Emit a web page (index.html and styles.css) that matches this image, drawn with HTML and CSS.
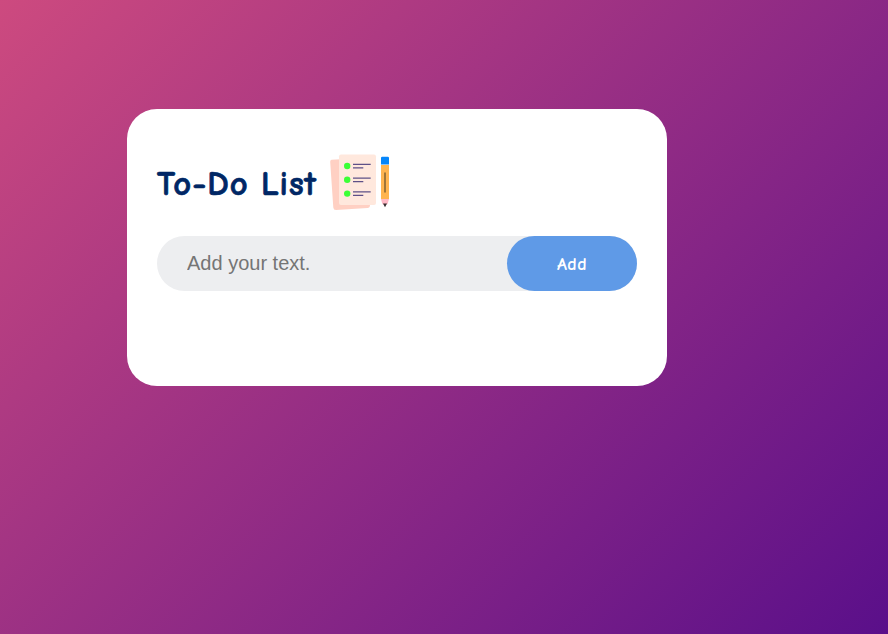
FILE: index.html
```html
<!DOCTYPE html>
<html lang="en">
<head>
<meta charset="utf-8">
<title>To-Do List</title>
<link rel="stylesheet" href="styles.css">
</head>
<body>
<main class="card">
  <h1 class="title"><span class="title-text">To-Do List</span>
    <svg class="title-icon" viewBox="0 0 60 58" aria-hidden="true">
      <path d="M1.5 5.8L34 4l6 47q0 2.800-2.500 3L6 56Q3.500 56 3.300 53.500L.2 8Q0 6 1.500 5.800Z" fill="#ffd0c3"/>
      <rect x="9" y=".5" width="37" height="50.5" rx="2" fill="#ffe8dd"/>
      <g fill="#3bff35"><circle cx="17.2" cy="12" r="3.2"/><circle cx="17.2" cy="25.8" r="3.2"/><circle cx="17.2" cy="39.6" r="3.2"/></g>
      <path d="M23 10.3h17.7M23 13.8h10.3M23 24.1h17.7M23 27.6h10.3M23 37.9h17.7M23 41.4h10.3" stroke="#5e5087" stroke-width="1.3"/>
      <path d="M51 11h8v34h-8z" fill="#ffb450"/>
      <path d="M51 10.5V4q0-1.2 1.2-1.2h5.6Q59 2.8 59 4v6.5z" fill="#0586fb"/>
      <path d="M51 45h8l-1.2 4.5q-.3 1-1.5 1h-2.6q-1.2 0-1.5-1z" fill="#ffb9c6"/>
      <path d="M53 49.5h4L55 53.3z" fill="#382f31"/>
      <path d="M55 18.5v20" stroke="#806032" stroke-width="1.5"/>
    </svg>
  </h1>
  <div class="row">
    <input class="field" type="text" placeholder="Add your text." aria-label="New task">
    <button class="add" type="button">Add</button>
  </div>
</main>
</body>
</html>
```

FILE: styles.css
```css
* {
  box-sizing: border-box;
  margin: 0;
  padding: 0;
}

body {
  min-height: 100vh;
  padding-top: 109px;
  padding-left: 127px;
  background: linear-gradient(135deg, #cd4a7f, #5a0f8a);
  font-family: "Comic Sans MS", "Comic Neue", Lato, sans-serif;
}

.card {
  width: 540px;
  height: 277px;
  padding: 45px 30px 0;
  border-radius: 30px;
  background: #fff;
}

.title {
  display: flex;
  height: 58px;
  align-items: center;
  color: #002765;
  font-size: 34.5px;
  font-weight: 700;
}

.title-text {
  width: 173px;
  padding-top: 2px;
  letter-spacing: 1px;
  word-spacing: -1px;
  white-space: nowrap;
  -webkit-text-stroke: 0.7px #002765;
}

.title-icon {
  width: 60px;
  height: 58px;
}

.row {
  display: flex;
  height: 55px;
  margin-top: 24px;
  border-radius: 30px;
  background: #edeef0;
}

.field {
  flex: 1;
  min-width: 0;
  padding: 0 0 1px 30px;
  border: 0;
  outline: 0;
  background: transparent;
  font-family: "Liberation Sans", Arial, sans-serif;
  font-size: 20px;
}

.field::placeholder {
  color: #757575;
}

.add {
  width: 130px;
  padding-top: 2px;
  border: 0;
  border-radius: 30px;
  background: #5f9ae7;
  color: #fff;
  font-family: inherit;
  font-size: 18px;
  font-weight: 600;
  letter-spacing: 0.4px;
}
```
